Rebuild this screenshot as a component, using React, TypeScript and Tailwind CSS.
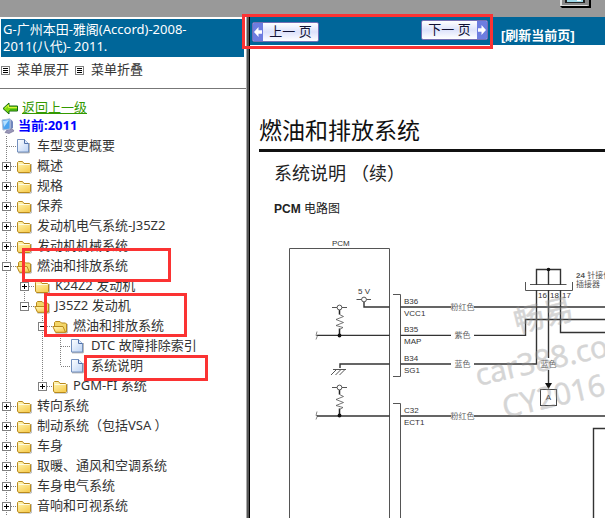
import { useState } from 'react';
import type { ReactNode } from 'react';

type Kind = 'page' | 'folder' | 'open';

interface Row {
  label: string;
  kind: Kind;
  // vertical lines of the ancestors, left to right
  guides: boolean[];
  sign?: '+' | '-';
  last?: boolean;
  mark?: string;
}

const rows: Row[] = [
  { label: '车型变更概要', kind: 'page', guides: [] },
  { label: '概述', kind: 'folder', guides: [], sign: '+' },
  { label: '规格', kind: 'folder', guides: [], sign: '+' },
  { label: '保养', kind: 'folder', guides: [], sign: '+' },
  { label: '发动机电气系统-J35Z2', kind: 'folder', guides: [], sign: '+' },
  { label: '发动机机械系统', kind: 'folder', guides: [], sign: '+' },
  { label: '燃油和排放系统', kind: 'open', guides: [], sign: '-', mark: 'left-[22px] -top-2 w-[149px] h-[34px]' },
  { label: 'K24Z2 发动机', kind: 'folder', guides: [true], sign: '+' },
  { label: 'J35Z2 发动机', kind: 'open', guides: [true], sign: '-', last: true, mark: 'left-11 -top-[3px] w-[143px] h-11' },
  { label: '燃油和排放系统', kind: 'open', guides: [true, false], sign: '-' },
  { label: 'DTC 故障排除索引', kind: 'page', guides: [true, false, true] },
  { label: '系统说明', kind: 'page', guides: [true, false, true], last: true, mark: 'left-[84px] -top-px w-[124px] h-[26px]' },
  { label: 'PGM-FI 系统', kind: 'folder', guides: [true, false], sign: '+', last: true },
  { label: '转向系统', kind: 'folder', guides: [], sign: '+' },
  { label: '制动系统（包括VSA ）', kind: 'folder', guides: [], sign: '+' },
  { label: '车身', kind: 'folder', guides: [], sign: '+' },
  { label: '取暖、通风和空调系统', kind: 'folder', guides: [], sign: '+' },
  { label: '车身电气系统', kind: 'folder', guides: [], sign: '+' },
  { label: '音响和可视系统', kind: 'folder', guides: [], sign: '+' },
];

function Guide({ on }: { on: boolean }) {
  return (
    <svg className="w-[18px] h-5 shrink-0" viewBox="0 0 18 20">
      {on && <path d="M6.5 0V20" stroke="#808080" strokeDasharray="1 1" />}
    </svg>
  );
}

function Joint({ sign, last }: { sign?: '+' | '-'; last?: boolean }) {
  return (
    <svg className="w-4 h-5 shrink-0" viewBox="0 0 16 20" fill="none">
      <path d={last ? 'M6.5 0V10' : 'M6.5 0V20'} stroke="#808080" strokeDasharray="1 1" />
      <path d="M7 10.5H16" stroke="#808080" strokeDasharray="1 1" />
      {sign && (
        <>
          <rect x="2.5" y="6.5" width="8" height="8" fill="#fff" stroke="#808080" />
          <path d={sign === '+' ? 'M4 10.5H9M6.5 8V13' : 'M4 10.5H9'} stroke="#000" />
        </>
      )}
    </svg>
  );
}

function TreeIcon({ kind }: { kind: Kind }) {
  return (
    <svg className="w-4 h-4 shrink-0" viewBox="0 0 16 16">
      <defs>
        <linearGradient id="fold" x1="0" y1="0" x2="0.6" y2="1">
          <stop offset="0" stopColor="#fff9bd" />
          <stop offset="1" stopColor="#f8cf55" />
        </linearGradient>
        <linearGradient id="sheet" x1="0" y1="0" x2="1" y2="1">
          <stop offset="0" stopColor="#fff" />
          <stop offset="1" stopColor="#bcd3f5" />
        </linearGradient>
      </defs>
      {kind === 'page' && (
        <>
          <path d="M2 14.8H13.2V5" fill="none" stroke="#999" />
          <path d="M1.5 1.5H8.5L12.5 5.5V14H1.5Z" fill="url(#sheet)" stroke="#7390bf" />
          <path d="M8.5 1.5V5.5H12.5" fill="#dce8fb" stroke="#4e6fa8" />
        </>
      )}
      {kind === 'folder' && (
        <>
          <path d="M2.5 15H15.2V6" fill="none" stroke="#aaa" />
          <path d="M1.5 13V4.5L2.5 3.5H6.5L8 5.5H13.5L14.5 6.5V13.5L13.5 14.5H2.5Z" fill="url(#fold)" stroke="#b98a1c" />
          <path d="M2.5 6.5H13.5" stroke="#fffbe0" />
        </>
      )}
      {kind === 'open' && (
        <>
          <path d="M3.5 15H15.2V6" fill="none" stroke="#aaa" />
          <path d="M2.5 12V4.5L3.5 3.5H8L9.5 5H13.5L14.5 6V14H4Z" fill="#f3d668" stroke="#b98a1c" />
          <path d="M0.8 8.5H11L13.5 14.3H3.5Z" fill="url(#fold)" stroke="#b98a1c" />
        </>
      )}
    </svg>
  );
}

function MenuIcon() {
  return (
    <svg className="w-[9px] h-[9px] shrink-0" viewBox="0 0 9 9">
      <rect x="0.5" y="0.5" width="8" height="8" fill="#fff" stroke="#808080" />
      <path d="M2 2.5H7M2 4.5H7M2 6.5H7" stroke="#000" />
    </svg>
  );
}

function Tree() {
  const [current, setCurrent] = useState(11);

  return (
    <ul className="pt-px">
      {rows.map((row, i) => (
        <li key={i} className="relative flex items-center h-5">
          {row.guides.map((on, g) => (
            <Guide key={g} on={on} />
          ))}
          <Joint sign={row.sign} last={row.last} />
          <TreeIcon kind={row.kind} />
          <a
            href="#"
            aria-current={i === current}
            onClick={() => setCurrent(i)}
            className="pl-[5px] pb-0.5 leading-[18px] whitespace-nowrap"
          >
            {row.label}
          </a>
          {row.mark && (
            <span className={`absolute z-10 border-3 border-[#fb3333] pointer-events-none ${row.mark}`} />
          )}
        </li>
      ))}
    </ul>
  );
}

function Sidebar() {
  return (
    <aside className="w-[247px] shrink-0 flex flex-col overflow-hidden border-r border-[#aaa] pt-0.5 text-[13px] text-[#333]">
      <h1 className="ml-px mr-0.5 px-0.5 py-0.5 bg-[#006699] text-white leading-[17px]">
        G-广州本田-雅阁(Accord)-2008-
        <br />
        2011(八代)- 2011.
      </h1>
      <div className="flex items-center h-8 pl-px pb-[5px] border-b border-[#777] shrink-0">
        <MenuIcon />
        <button className="pl-[7px] pr-1.5">菜单展开</button>
        <MenuIcon />
        <button className="pl-[7px]">菜单折叠</button>
      </div>
      <div className="flex items-center h-[18px] mt-2.5 pl-0.5 gap-1 shrink-0">
        <svg className="w-4 h-4" viewBox="0 0 16 16">
          <path d="M1 8.5L7 3V6H15.5V11H7V14Z" fill="#7ddb10" stroke="#14690c" />
          <path d="M3 8.3L6.5 5V7.5H15" fill="none" stroke="#d9f23c" />
          <path d="M8 9.8H15" stroke="#2fa01a" />
        </svg>
        <a href="#" className="text-[#339900] underline">返回上一级</a>
      </div>
      <div className="flex items-center h-[18px] gap-0.5 shrink-0">
        <svg className="w-4 h-4" viewBox="0 0 16 16">
          <path d="M7 12L12 10.5L14 13L9 15.5L5 14.5Z" fill="#9997b8" stroke="#68648c" strokeWidth="0.6" />
          <path d="M2 2L10 0.8V11L3 12Z" fill="#4ba3ef" stroke="#aebdd8" />
          <path d="M3 3L9 2L4 9Z" fill="#b4e0ff" />
          <path d="M10.5 1L13 3.5V10L10.5 11Z" fill="#7186bd" />
        </svg>
        <strong className="text-[#0000ff] whitespace-nowrap">当前:2011</strong>
      </div>
      <Tree />
    </aside>
  );
}

function PageButton({ children, next }: { children: ReactNode; next?: boolean }) {
  const cap = (
    <svg className="w-[10px] h-full" viewBox="0 0 10 16" preserveAspectRatio="none">
      <rect width="10" height="16" fill="#6d7de0" />
      <path d={next ? 'M1 6.5H4.5V3.5L9 8L4.5 12.5V9.5H1Z' : 'M9 6.5H5.5V3.5L1 8L5.5 12.5V9.5H9Z'} fill="#fff" />
    </svg>
  );
  return (
    <button className="flex items-center w-[67px] h-5 overflow-hidden border border-[#7470b4] rounded-xs bg-linear-to-b from-white via-[#dde2fb] to-white text-[13px] text-[#111133]">
      {!next && cap}
      <span className="flex-1 whitespace-nowrap">{children}</span>
      {next && cap}
    </button>
  );
}

function Toolbar() {
  return (
    <div className="relative flex h-7 shrink-0 bg-[#006699] pl-0.5">
      <div className="pt-[5px]">
        <PageButton>上一 页</PageButton>
      </div>
      <div className="ml-[102px] pt-[3px]">
        <PageButton next>下一 页</PageButton>
      </div>
      <a href="#" className="ml-[13px] pt-[11px] leading-4 text-[13px] font-bold text-white whitespace-nowrap">
        [刷新当前页]
      </a>
      <span className="absolute z-10 -left-2 -top-[3px] w-[251px] h-[35px] border-3 border-[#fb3333] pointer-events-none" />
    </div>
  );
}

function Pullup({ y }: { y: number }) {
  return (
    <g fill="none" stroke="#555">
      <path d={`M332 ${y}H347`} />
      <path d={`M339.5 ${y + 2}V${y + 7}M339.5 ${y + 21}V${y + 28}`} strokeWidth="1.5" stroke="#222" />
      <path d={`M339.5 ${y + 7}L343.5 ${y + 9}L336 ${y + 12}L343.5 ${y + 15}L336 ${y + 18}L343 ${y + 20}L339.5 ${y + 22}`} strokeWidth="0.8" />
      <circle cx="339.5" cy={y} r="2.4" fill="#fff" />
      <circle cx="339.5" cy={y + 28} r="1.9" fill="#111" stroke="none" />
      <path d={`M317 ${y + 24}L316 ${y + 28}L317.5 ${y + 28}L316 ${y + 32}`} strokeWidth="0.7" />
    </g>
  );
}

const pins = [
  { y: 307, a: 'B36', b: 'VCC1', color: '粉红色' },
  { y: 335, a: 'B35', b: 'MAP', color: '紫色' },
  { y: 364, a: 'B34', b: 'SG1', color: '蓝色' },
  { y: 416, a: 'C32', b: 'ECT1', color: '粉红色' },
];

function Circuit() {
  return (
    <svg
      className="w-[355px] h-[293px] shrink-0 font-['Liberation_Sans','Noto_Sans_CJK_SC',sans-serif]"
      viewBox="250 225 355 293"
      role="img"
      aria-label="PCM 电路图"
    >
      <g fill="none" stroke="#555">
        <path d="M289.5 518V248.5H389.5V518" />
        <path d="M393 294.5H400.5V376.5H393M393 403.5H400.5V518" />
        <path d="M356.5 299.5H371" />
        <path d="M525.5 282V290.5H572.5V282M530 284.5H566.5" />
      </g>
      <g fill="none" stroke="#333" strokeWidth="1.4">
        <path d="M364 302V307H389.5" />
        <path d="M317 335.4H389.5M317 416H389.5" />
        <path d="M340 368V364H389.5" />
        <path d="M400.5 307H451M474 307H605" />
        <path d="M400.5 335.4H451M474 335.4H525.5V319.5H605" />
        <path d="M400.5 364H451M474 364H536.5V290" />
        <path d="M400.5 416H451M474 416H605" />
        <path d="M536.5 285V269.5H560.5V285M548.5 269.5V285" />
        <path d="M548.5 290V358M560.5 290V332.5H605M548.5 370V384" />
        <path d="M593.5 518V428.5H605" />
      </g>
      <circle cx="364" cy="299.5" r="2.4" fill="#fff" stroke="#555" />
      <circle cx="548.5" cy="269.5" r="1.8" fill="#111" />
      <path d="M545 383H552L548.5 389Z" fill="#111" />
      <Pullup y={307.5} />
      <Pullup y={387.5} />
      <path d="M333 369.5H346M336.5 369.5L331 375M341 369.5L335.5 375M345 369.5L339.5 375" stroke="#555" fill="none" />
      <rect x="540.5" y="389.5" width="16" height="16" fill="none" stroke="#444" />

      <g fill="#333" fontSize="8">
        <text x="332" y="246">PCM</text>
        <text x="358" y="294">5 V</text>
        {pins.map((p) => (
          <g key={p.a}>
            <text x="404" y={p.y - 3}>{p.a}</text>
            <text x="404" y={p.y + 9}>{p.b}</text>
            <text x="462.5" y={p.y + 3} textAnchor="middle" fill="#666">{p.color}</text>
          </g>
        ))}
        <text x="548.5" y="367" textAnchor="middle" fill="#666">蓝色</text>
        <text x="538" y="298">16</text>
        <text x="550" y="298">18</text>
        <text x="562" y="298">17</text>
        <text x="548.5" y="400" textAnchor="middle">A</text>
        <text x="576" y="278" fill="#555"><tspan fontWeight="bold">24</tspan> 针接件</text>
        <text x="576" y="287" fill="#555">插接器</text>
      </g>

      <g
        className="font-['Open_Sans','Noto_Sans_CJK_SC',sans-serif]"
        fill="#999"
        stroke="#999"
        strokeWidth="0.6"
        opacity="0.4"
        fontSize="30"
      >
        <text transform="translate(517 333) rotate(-14)">畅易</text>
        <text transform="translate(478 386) rotate(-13)">car388.com</text>
        <text transform="translate(505 418) rotate(-13)">CY2016</text>
      </g>
    </svg>
  );
}

export default function App() {
  return (
    <div className="flex flex-col h-screen overflow-hidden bg-white font-['Noto_Sans','Noto_Sans_CJK_SC',sans-serif]">
      <header className="flex justify-end items-start h-[17px] shrink-0 bg-[#999999] pr-3.5">
        <svg className="w-[31px] h-2" viewBox="0 0 31 8">
          <path d="M0 0H31V8H2L0 6Z" fill="#000" />
          <path d="M0 0H29V6H0Z" fill="#ddd" />
          <path d="M2 0H29V6L27 5H2Z" fill="#888" />
          <rect x="5" width="20" height="3" fill="#222" />
          <rect x="7" width="16" height="2" fill="#9fd8e8" />
          <rect x="17" width="4" height="1" fill="#fff" />
        </svg>
      </header>
      <div className="flex flex-1 min-h-0">
        <Sidebar />
        <main className="flex-1 min-w-0 flex flex-col border-l border-black shadow-[-2px_0_0_#555] ml-0.5 font-['Liberation_Sans','Noto_Sans_CJK_SC',sans-serif] text-[#222]">
          <Toolbar />
          <div className="flex flex-col overflow-x-clip">
            <h2 className="ml-[9px] pt-[69px] pb-1 h-[107px] border-b-3 border-[#111] text-[23px] leading-[34px] text-[#111] font-normal whitespace-nowrap">
              燃油和排放系统
            </h2>
            <h3 className="pl-6 pt-[9px] text-[18px] leading-[26px] whitespace-nowrap">系统说明 （续）</h3>
            <h4 className="pl-6 pt-[13px] pb-[7px] text-xs leading-[18px] whitespace-nowrap">
              <b className="font-black">PCM</b> 电路图
            </h4>
            <Circuit />
          </div>
        </main>
      </div>
    </div>
  );
}
